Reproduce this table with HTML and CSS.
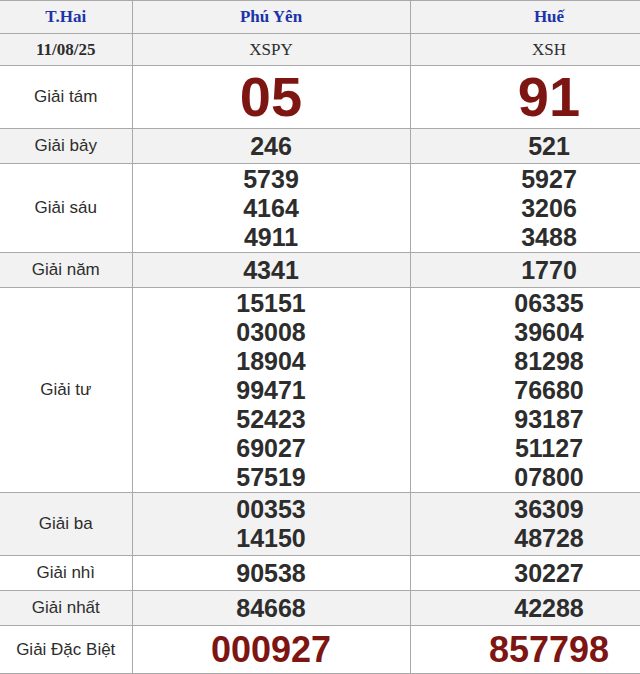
FILE: index.html
```html
<!DOCTYPE html>
<html lang="vi">
<head>
<meta charset="utf-8">
<title>XSMT</title>
<link rel="stylesheet" href="styles.css">
</head>
<body>
<table class="kq">
  <colgroup><col class="c1"><col class="c2"><col class="c3"></colgroup>
  <tr class="head h33">
    <th class="day">T.Hai</th>
    <th class="prov">Phú Yên</th>
    <th class="prov">Huế</th>
  </tr>
  <tr class="sub h32">
    <td class="date">11/08/25</td>
    <td class="code">XSPY</td>
    <td class="code">XSH</td>
  </tr>
  <tr class="h63 white">
    <td class="lbl">Giải tám</td>
    <td class="big">05</td>
    <td class="big">91</td>
  </tr>
  <tr class="h35 grey">
    <td class="lbl">Giải bảy</td>
    <td class="num">246</td>
    <td class="num">521</td>
  </tr>
  <tr class="h89 white">
    <td class="lbl">Giải sáu</td>
    <td class="num">5739<br>4164<br>4911</td>
    <td class="num">5927<br>3206<br>3488</td>
  </tr>
  <tr class="h35 grey">
    <td class="lbl">Giải năm</td>
    <td class="num">4341</td>
    <td class="num">1770</td>
  </tr>
  <tr class="h205 white">
    <td class="lbl">Giải tư</td>
    <td class="num">15151<br>03008<br>18904<br>99471<br>52423<br>69027<br>57519</td>
    <td class="num">06335<br>39604<br>81298<br>76680<br>93187<br>51127<br>07800</td>
  </tr>
  <tr class="h63 grey">
    <td class="lbl">Giải ba</td>
    <td class="num">00353<br>14150</td>
    <td class="num">36309<br>48728</td>
  </tr>
  <tr class="h35 white">
    <td class="lbl">Giải nhì</td>
    <td class="num">90538</td>
    <td class="num">30227</td>
  </tr>
  <tr class="h35 grey">
    <td class="lbl">Giải nhất</td>
    <td class="num">84668</td>
    <td class="num">42288</td>
  </tr>
  <tr class="h48 white">
    <td class="lbl">Giải Đặc Biệt</td>
    <td class="db">000927</td>
    <td class="db">857798</td>
  </tr>
</table>
</body>
</html>
```

FILE: styles.css
```css
html, body {
  margin: 0;
  padding: 0;
  background: #fff;
  overflow: hidden;
}

.kq {
  border-collapse: collapse;
  table-layout: fixed;
  width: 688px;
  font-family: "Liberation Sans", Arial, sans-serif;
  color: #2d2d2d;
}

.c1 { width: 132px; }
.c2 { width: 278px; }
.c3 { width: 278px; }

.kq th,
.kq td {
  border: 1px solid #a9a9a9;
  padding: 0;
  text-align: center;
  vertical-align: middle;
}

.kq tr > :first-child { border-left: none; }

.head, .sub, .grey { background: #f2f2f2; }
.white { background: #fff; }

.h33 { height: 33px; }
.h32 { height: 32px; }
.h35 { height: 35px; }
.h48 { height: 48px; }
.h63 { height: 63px; }
.h89 { height: 89px; }
.h205 { height: 205px; }

.day, .prov {
  font-family: "Liberation Serif", "Times New Roman", serif;
  font-weight: bold;
  font-size: 17px;
  color: #1d34a8;
}

.date {
  font-family: "Liberation Serif", "Times New Roman", serif;
  font-weight: bold;
  font-size: 17px;
  color: #2d2d2d;
}

.code {
  font-family: "Liberation Serif", "Times New Roman", serif;
  font-size: 17px;
  color: #2d2d2d;
}

.lbl {
  font-size: 17px;
  color: #2d2d2d;
}

.num {
  font-size: 25px;
  font-weight: bold;
  line-height: 29px;
}

.big {
  font-size: 56px;
  font-weight: bold;
  line-height: 60px;
  color: #7d1512;
}

.db {
  font-size: 36px;
  font-weight: bold;
  line-height: 44px;
  color: #7d1512;
}
```
